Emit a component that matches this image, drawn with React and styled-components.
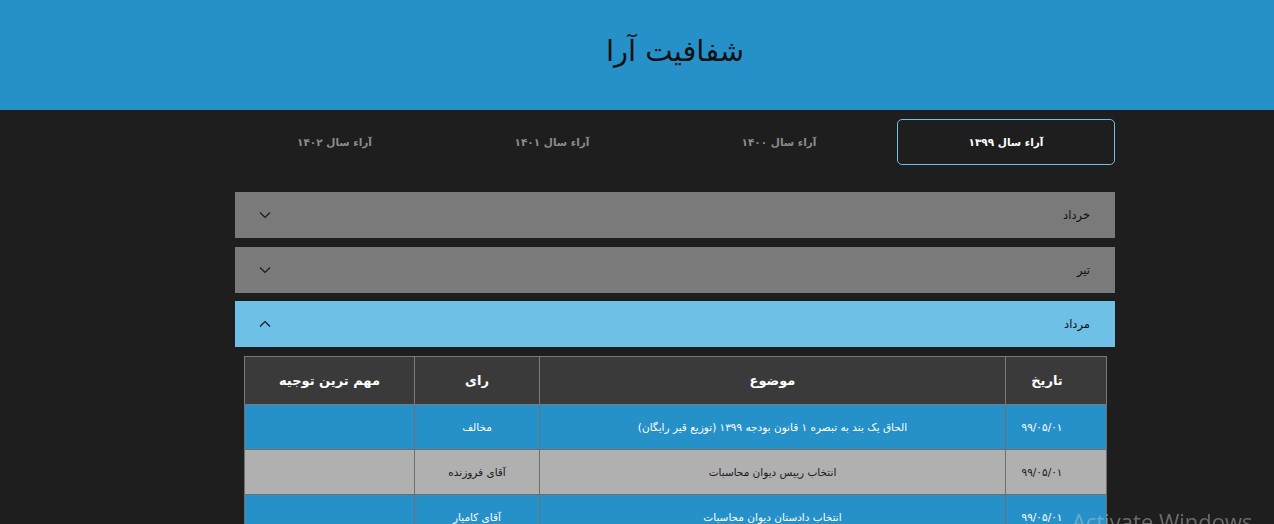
import React, { useState } from "react";
import styled, { createGlobalStyle } from "styled-components";

const GlobalStyle = createGlobalStyle`
  html, body {
    margin: 0;
    padding: 0;
    background: #1e1e1e;
    overflow: hidden;
  }
  body {
    font-family: "DejaVu Sans", "Noto Sans", sans-serif;
  }
`;

const Header = styled.header`
  background: #2691c9;
  height: 110px;
  display: flex;
  justify-content: center;
  align-items: center;
  padding-left: 76px;
`;

const Title = styled.h1`
  margin: 0 0 8px;
  font-size: 29px;
  font-weight: 400;
  color: #111;
`;

const Main = styled.main`
  width: 880px;
  margin-left: 235px;
  padding-top: 9px;
  direction: rtl;
`;

const Tabs = styled.nav`
  display: grid;
  grid-template-columns: 218px 218px 218px 199px;
  column-gap: 9px;
`;

const Tab = styled.button`
  height: 46px;
  background: transparent;
  border: 1px solid ${(p) => (p.active ? "#6ec0e6" : "transparent")};
  border-radius: 5px;
  color: ${(p) => (p.active ? "#fff" : "#8c8c8c")};
  font-family: inherit;
  font-size: 10.5px;
  font-weight: 700;
  cursor: pointer;
`;

const Accordion = styled.section`
  margin-top: 27px;
  display: flex;
  flex-direction: column;
  gap: 8.5px;
`;

const Bar = styled.div`
  height: 46px;
  background: ${(p) => (p.open ? "#6ec0e6" : "#7a7a7a")};
  display: flex;
  align-items: center;
  justify-content: space-between;
  padding: 0 25px 0 24px;
  color: #111;
  font-size: 11.5px;
  cursor: pointer;
`;

const Chevron = styled.svg`
  width: 12px;
  height: 8px;
  display: block;
`;

const Panel = styled.div`
  padding: 9px 8px 0 9px;
`;

const Table = styled.table`
  width: 100%;
  table-layout: fixed;
  border-collapse: collapse;
  font-size: 10.5px;
`;

const Th = styled.th`
  box-sizing: border-box;
  background: #3a3a3a;
  color: #fff;
  height: 48px;
  font-size: 13px;
  font-weight: 700;
  border: 1px solid #7b7b7b;
  width: ${(p) => p.w || "auto"};
  padding: ${(p) => (p.date ? "0 18px 0 0" : "0")};
`;

const Tr = styled.tr`
  background: ${(p) => (p.alt ? "#b0b0b0" : "#2691c9")};
  color: ${(p) => (p.alt ? "#1a1a1a" : "#fff")};
`;

const Td = styled.td`
  box-sizing: border-box;
  height: 45px;
  text-align: center;
  border: 1px solid #6f6f6f;
  padding: ${(p) => (p.date ? "0 28px 0 0" : "0")};
`;

const Watermark = styled.div`
  position: fixed;
  left: 1072px;
  top: 506px;
  font-family: "Open Sans", "DejaVu Sans", sans-serif;
  font-size: 22px;
  color: rgba(200, 200, 200, 0.45);
  white-space: nowrap;
  pointer-events: none;
`;

const years = ["آراء سال ۱۳۹۹", "آراء سال ۱۴۰۰", "آراء سال ۱۴۰۱", "آراء سال ۱۴۰۲"];
const months = ["خرداد", "تیر", "مرداد"];

const rows = [
  { date: "۹۹/۰۵/۰۱", topic: "الحاق یک بند به تبصره ۱ قانون بودجه ۱۳۹۹ (توزیع قیر رایگان)", vote: "مخالف", note: "" },
  { date: "۹۹/۰۵/۰۱", topic: "انتخاب رییس دیوان محاسبات", vote: "آقای فروزنده", note: "" },
  { date: "۹۹/۰۵/۰۱", topic: "انتخاب دادستان دیوان محاسبات", vote: "آقای کامیار", note: "" },
];

function Arrow({ up }) {
  return (
    <Chevron viewBox="0 0 12 8">
      <polyline
        points={up ? "1,6.5 6,1.5 11,6.5" : "1,1.5 6,6.5 11,1.5"}
        fill="none"
        stroke="#1a1a1a"
        strokeWidth="1.2"
      />
    </Chevron>
  );
}

export default function App() {
  const [year, setYear] = useState(0);
  const [open, setOpen] = useState(2);

  return (
    <>
      <GlobalStyle />
      <Header>
        <Title>شفافیت آرا</Title>
      </Header>
      <Main>
        <Tabs>
          {years.map((y, i) => (
            <Tab key={y} active={i === year} onClick={() => setYear(i)}>
              {y}
            </Tab>
          ))}
        </Tabs>
        <Accordion>
          {months.map((m, i) => (
            <div key={m}>
              <Bar open={i === open} onClick={() => setOpen(i === open ? -1 : i)}>
                <span>{m}</span>
                <Arrow up={i === open} />
              </Bar>
              {i === open && (
                <Panel>
                  <Table>
                    <thead>
                      <tr>
                        <Th w="101px" date>تاریخ</Th>
                        <Th w="466px">موضوع</Th>
                        <Th w="125px">رای</Th>
                        <Th>مهم ترین توجیه</Th>
                      </tr>
                    </thead>
                    <tbody>
                      {rows.map((r, k) => (
                        <Tr key={k} alt={k % 2 === 1}>
                          <Td date>{r.date}</Td>
                          <Td>{r.topic}</Td>
                          <Td>{r.vote}</Td>
                          <Td>{r.note}</Td>
                        </Tr>
                      ))}
                    </tbody>
                  </Table>
                </Panel>
              )}
            </div>
          ))}
        </Accordion>
      </Main>
      <Watermark>Activate Windows</Watermark>
    </>
  );
}
